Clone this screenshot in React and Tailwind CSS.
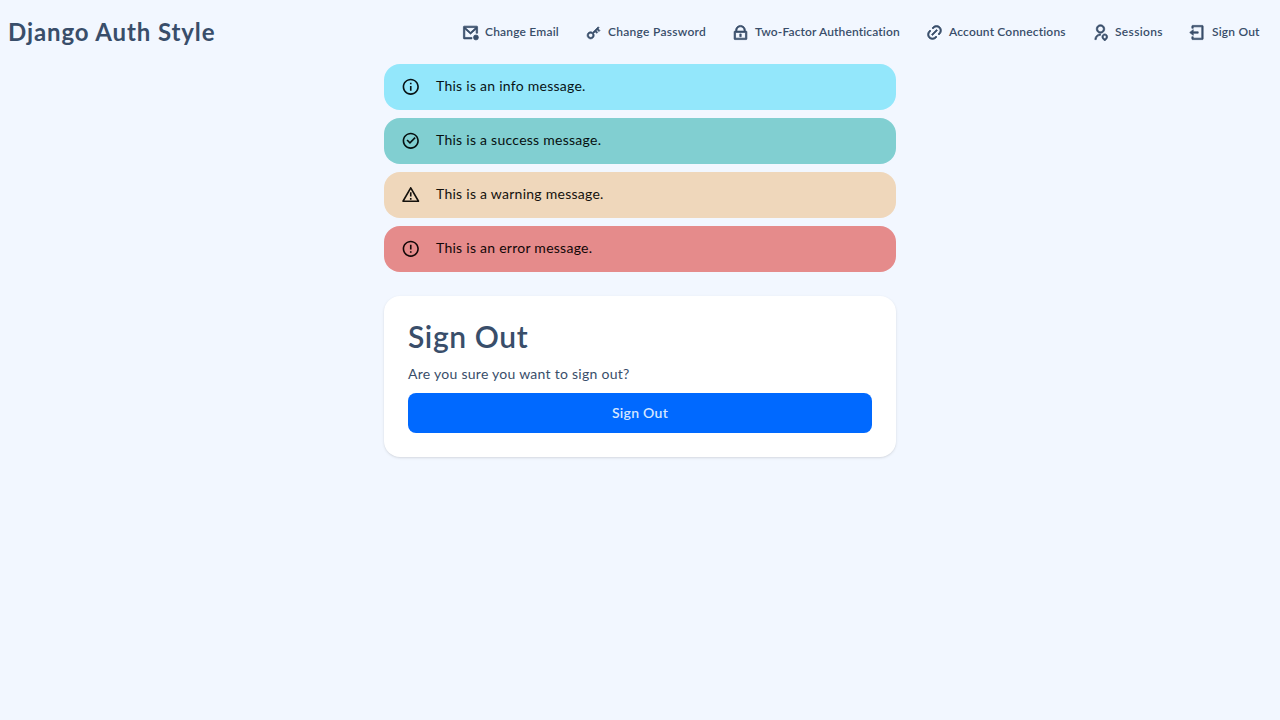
import React from 'react';
import {
  RiKey2Line,
  RiLockLine,
  RiLink,
  RiUserLocationLine,
  RiLogoutBoxLine,
  RiInformationLine,
  RiCheckboxCircleLine,
  RiAlertLine,
  RiErrorWarningLine,
} from 'react-icons/ri';

function MailIcon({ size, ...props }) {
  return (
    <svg width={size} height={size} viewBox="0 0 24 24" fill="currentColor" {...props}>
      <path d="M22 13h-2V7.238l-7.928 7.1L4 7.216V19h10v2H3a1 1 0 0 1-1-1V4a1 1 0 0 1 1-1h18a1 1 0 0 1 1 1v9zM4.511 5l7.55 6.662L19.502 5H4.511z" />
      <circle cx="19.7" cy="19" r="3.5" />
    </svg>
  );
}

const links = [
  { label: 'Change Email', Icon: MailIcon, box: 'w-[74px] tracking-[0.19px]' },
  { label: 'Change Password', Icon: RiKey2Line, box: 'w-[98px] tracking-[0.28px]' },
  { label: 'Two-Factor Authentication', Icon: RiLockLine, box: 'w-[145px] tracking-[0.13px]' },
  { label: 'Account Connections', Icon: RiLink, box: 'w-[117px] tracking-[0.17px]' },
  { label: 'Sessions', Icon: RiUserLocationLine, box: 'w-[48px] tracking-[0.35px]' },
  { label: 'Sign Out', Icon: RiLogoutBoxLine, box: 'w-[48px] tracking-[0.18px]' },
];

const messages = [
  { text: 'This is an info message.', Icon: RiInformationLine, color: 'bg-[#93e7fb] text-[#081315]' },
  { text: 'This is a success message.', Icon: RiCheckboxCircleLine, color: 'bg-[#81cfd1] text-[#061010]' },
  { text: 'This is a warning message.', Icon: RiAlertLine, color: 'bg-[#efd7bb] text-[#14110d]' },
  { text: 'This is an error message.', Icon: RiErrorWarningLine, color: 'bg-[#e58b8b] text-[#120707]' },
];

export default function App() {
  return (
    <div className="min-h-screen bg-[#f2f7ff] font-['Lato',sans-serif] text-[#394e6a]">
      <header className="flex h-16 items-center justify-between pr-5 pl-2">
        <a className="text-2xl font-bold tracking-[0.88px] whitespace-nowrap">Django Auth Style</a>
        <nav className="flex items-center gap-[25.5px]">
          {links.map(({ label, Icon, box }) => (
            <a key={label} className="flex items-center gap-[6.5px] text-xs font-semibold whitespace-nowrap">
              <Icon size={17} stroke="currentColor" strokeWidth={1} />
              <span className={box}>{label}</span>
            </a>
          ))}
        </nav>
      </header>
      <main className="mx-auto w-lg">
        <div className="flex flex-col gap-2">
          {messages.map(({ text, Icon, color }) => (
            <div key={text} className={`flex h-[46px] items-center gap-[15.5px] rounded-2xl pb-px pl-[17px] text-sm ${color}`}>
              <Icon size={19.5} />
              <span className="pb-px tracking-[0.26px]">{text}</span>
            </div>
          ))}
        </div>
        <section className="mt-6 h-[161px] rounded-2xl bg-white px-6 pt-[22px] pb-6 shadow-sm">
          <h1 className="text-[30px] leading-9 font-semibold tracking-[0.6px]">Sign Out</h1>
          <p className="mt-2.5 text-sm leading-5 tracking-[0.27px]">Are you sure you want to sign out?</p>
          <button className="mt-[9px] h-10 w-full rounded-lg bg-[#0069ff] text-sm font-semibold tracking-[0.28px] text-[#d4e5ff]">
            Sign Out
          </button>
        </section>
      </main>
    </div>
  );
}
